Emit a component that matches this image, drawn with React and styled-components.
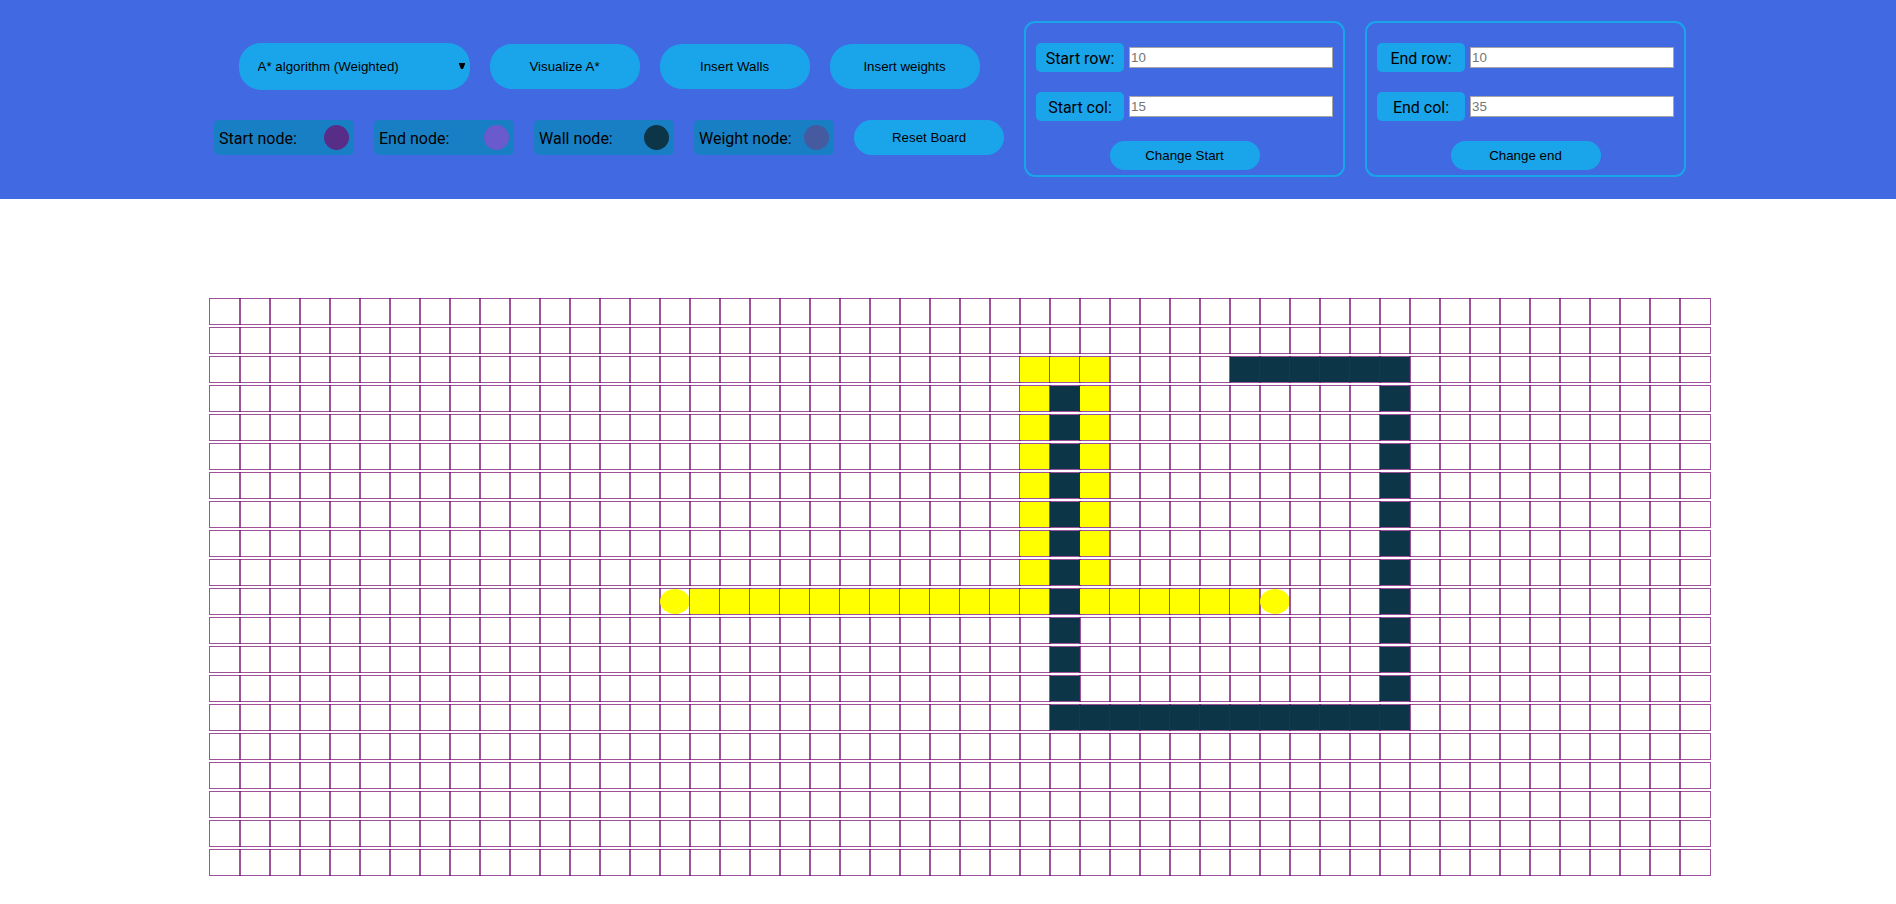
import React, { useState } from "react";
import styled, { createGlobalStyle, css } from "styled-components";

const ROWS = 20;
const COLS = 50;
const START = { row: 10, col: 15 };
const END = { row: 10, col: 35 };

const key = (row, col) => `${row}-${col}`;

const horizontal = (row, from, to) =>
  Array.from({ length: to - from + 1 }, (_, i) => key(row, from + i));
const vertical = (col, from, to) =>
  Array.from({ length: to - from + 1 }, (_, i) => key(from + i, col));

const WALLS = new Set([
  ...vertical(28, 3, 14),
  ...horizontal(14, 28, 39),
  ...vertical(39, 2, 14),
  ...horizontal(2, 34, 39),
]);

const PATH = new Set([
  ...horizontal(10, 16, 27),
  ...vertical(27, 2, 10),
  ...horizontal(2, 27, 29),
  ...vertical(29, 2, 10),
  ...horizontal(10, 29, 34),
]);

const GlobalStyle = createGlobalStyle`
  * { box-sizing: border-box; }
  body {
    margin: 0;
    background: #fff;
    color: #000;
    font-family: Roboto, "Liberation Sans", sans-serif;
    font-size: 16px;
  }
`;

const Header = styled.header`
  display: flex;
  justify-content: center;
  align-items: flex-start;
  gap: 20px;
  padding: 21px 20px 22px 24px;
  background: #4169e1;
`;

const Controls = styled.div`
  display: flex;
  flex-direction: column;
  gap: 30px;
  padding-top: 22px;
`;

const ControlRow = styled.div`
  display: flex;
  justify-content: center;
  align-items: center;
  gap: 20px;
`;

const control = css`
  border: 0;
  background: #1aa5eb;
  color: #000;
  font-family: "Liberation Sans", Arial, sans-serif;
`;

const heights = { large: 45, medium: 35, small: 29 };

const Button = styled.button`
  ${control}
  width: 150px;
  height: ${({ $size }) => heights[$size]}px;
  padding: 0;
  border-radius: 22px;
  cursor: pointer;
`;

const SelectWrap = styled.div`
  position: relative;
`;

const Select = styled.select`
  ${control}
  display: block;
  appearance: none;
  width: 231px;
  height: 47px;
  padding: 0 19px;
  border-radius: 22px;
`;

const Arrow = styled.svg`
  position: absolute;
  top: 20px;
  right: 5px;
  pointer-events: none;
`;

const LegendItem = styled.div`
  display: flex;
  align-items: center;
  justify-content: space-between;
  width: 140px;
  height: 35px;
  padding: 0 5px;
  border-radius: 5px;
  background: #197fc4;
`;

const LegendText = styled.span`
  padding-top: 2px;
  line-height: 19px;
`;

const Swatch = styled.span`
  width: 25px;
  height: 25px;
  border-radius: 50%;
  background: ${({ $color }) => $color};
`;

const Form = styled.form`
  display: flex;
  flex-direction: column;
  align-items: center;
  width: 321px;
  padding: 20px 10px 5px;
  border: 2px solid #1aa5eb;
  border-radius: 11px;
`;

const Field = styled.div`
  display: flex;
  align-items: center;
  align-self: stretch;
  gap: 5px;
  margin-bottom: 20px;
`;

const Label = styled.label`
  width: 88px;
  padding: 6px 0 4px;
  border-radius: 5px;
  background: #1aa5eb;
  line-height: 19px;
  text-align: center;
`;

const Input = styled.input`
  width: 204px;
  height: 21px;
  padding: 1px;
  border: 1px solid #a6a6a6;
  border-radius: 0;
  background: #fff;
  font-family: "Liberation Sans", Arial, sans-serif;
  &::placeholder { color: #757575; }
`;

const Board = styled.main`
  display: flex;
  flex-direction: column;
  align-items: center;
  gap: 4px;
  padding: 100px 0 29px 24px;
`;

const BoardRow = styled.div`
  display: flex;
`;

const Cell = styled.div`
  position: relative;
  z-index: 0;
  width: 30px;
  height: 25px;
  outline: 1px solid rgba(117, 9, 110, 0.7);
`;

const fills = { wall: "#0c3547", path: "#ffff00", end: "#ffff00" };

const Fill = styled.div`
  height: 100%;
  border-radius: ${({ $kind }) => ($kind === "end" ? "50%" : "0")};
  background: ${({ $kind }) => fills[$kind]};
`;

const kindOf = (row, col) => {
  const id = key(row, col);
  if (id === key(START.row, START.col) || id === key(END.row, END.col)) return "end";
  if (WALLS.has(id)) return "wall";
  if (PATH.has(id)) return "path";
  return null;
};

const LEGEND = [
  ["Start node:", "#582d88"],
  ["End node:", "#6a5acd"],
  ["Wall node:", "#0c3547"],
  ["Weight node:", "#465a9f"],
];

function NodeForm({ name, row, col, action }) {
  return (
    <Form onSubmit={(e) => e.preventDefault()}>
      <Field>
        <Label htmlFor={`${name}-row`}>{name} row:</Label>
        <Input id={`${name}-row`} placeholder={row} />
      </Field>
      <Field>
        <Label htmlFor={`${name}-col`}>{name} col:</Label>
        <Input id={`${name}-col`} placeholder={col} />
      </Field>
      <Button $size="small">{action}</Button>
    </Form>
  );
}

export default function App() {
  const [algorithm, setAlgorithm] = useState("astar");
  return (
    <>
      <GlobalStyle />
      <Header>
        <Controls>
          <ControlRow>
            <SelectWrap>
              <Select
                aria-label="Algorithm"
                value={algorithm}
                onChange={(e) => setAlgorithm(e.target.value)}
              >
                <option value="astar">A* algorithm (Weighted)</option>
              </Select>
              <Arrow width="6" height="6" viewBox="0 0 6 6" aria-hidden="true">
                <path d="M0 0H6V1L4 6H2L0 1Z" />
              </Arrow>
            </SelectWrap>
            <Button type="button" $size="large">Visualize A*</Button>
            <Button type="button" $size="large">Insert Walls</Button>
            <Button type="button" $size="large">Insert weights</Button>
          </ControlRow>
          <ControlRow>
            {LEGEND.map(([text, color]) => (
              <LegendItem key={text}>
                <LegendText>{text}</LegendText>
                <Swatch $color={color} />
              </LegendItem>
            ))}
            <Button type="button" $size="medium">Reset Board</Button>
          </ControlRow>
        </Controls>
        <NodeForm name="Start" row="10" col="15" action="Change Start" />
        <NodeForm name="End" row="10" col="35" action="Change end" />
      </Header>
      <Board>
        {Array.from({ length: ROWS }, (_, row) => (
          <BoardRow key={row}>
            {Array.from({ length: COLS }, (_, col) => {
              const kind = kindOf(row, col);
              return <Cell key={col}>{kind && <Fill $kind={kind} />}</Cell>;
            })}
          </BoardRow>
        ))}
      </Board>
    </>
  );
}
